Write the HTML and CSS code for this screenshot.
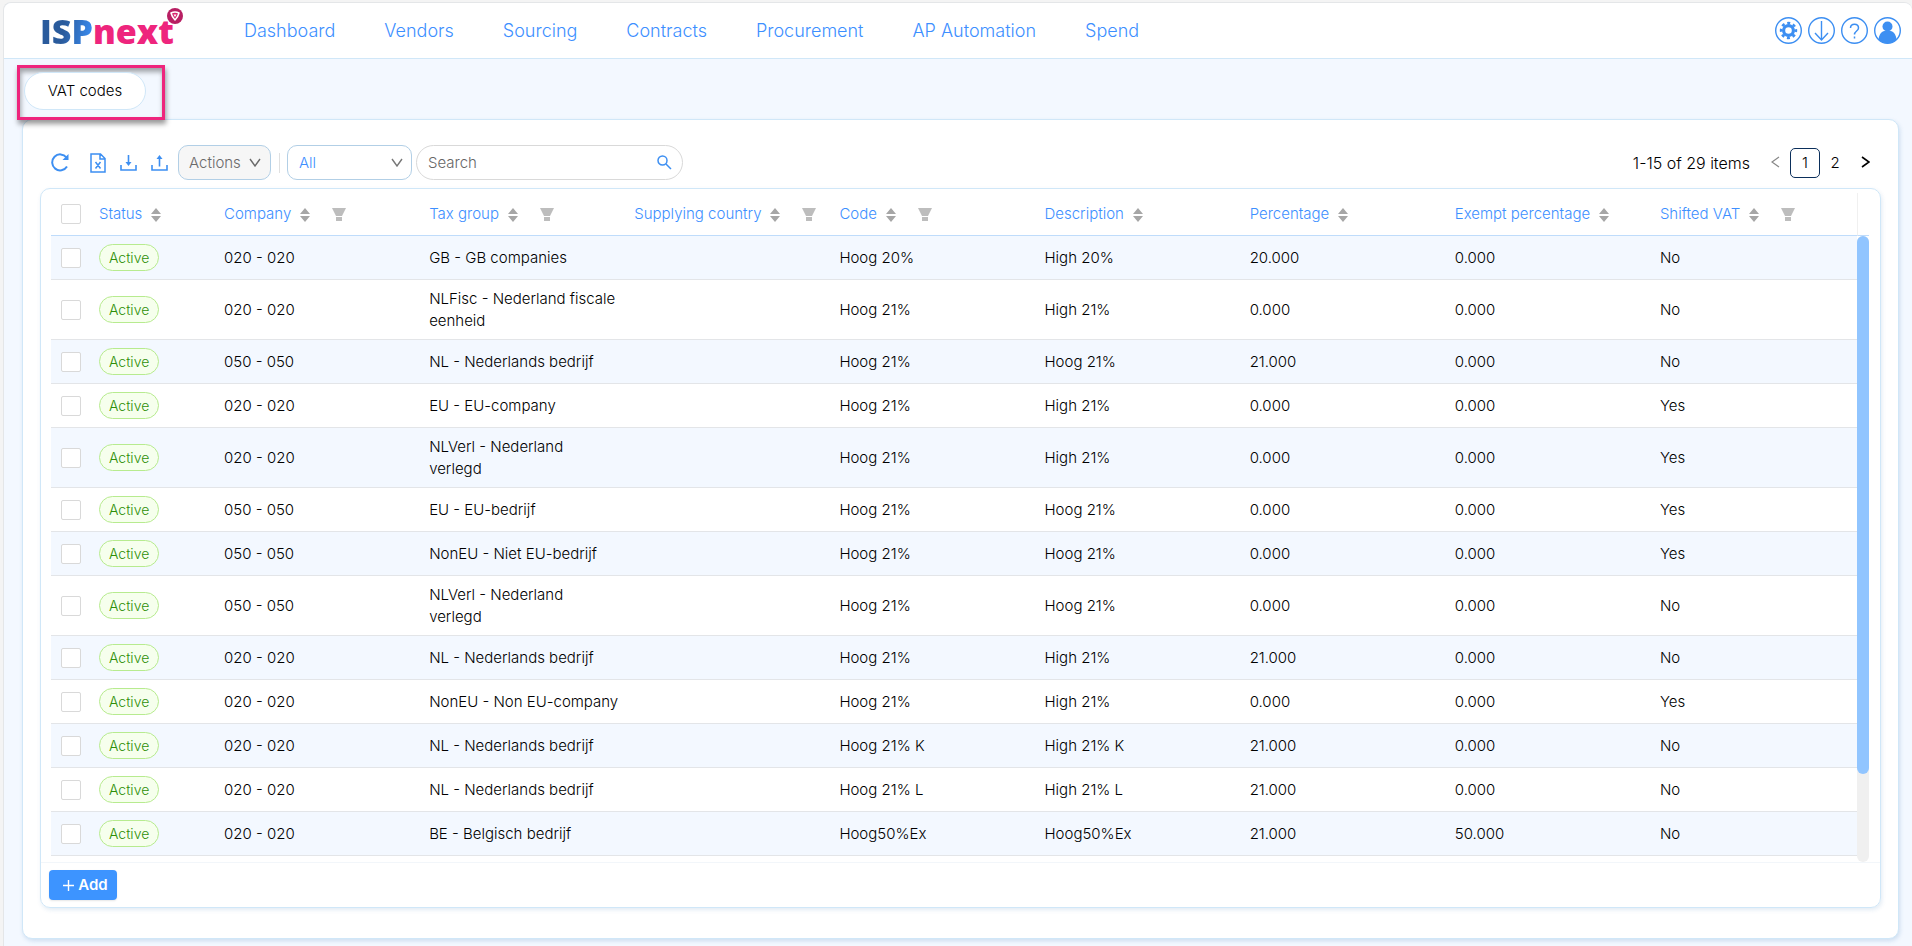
FILE: index.html
```
<!DOCTYPE html>
<html lang="en">
<head>
    <meta charset="UTF-8">
    <title>VAT codes</title>
    <link rel="stylesheet" href="styles.css">
</head>
<body>
    <!-- Icons used more than once -->
    <svg class="icon-defs" aria-hidden="true">
        <symbol id="sort" viewBox="0 0 10 14"><path d="M5 0l5 6H0zM0 8h10l-5 6z"/></symbol>
        <symbol id="filter" viewBox="0 0 14 13"><path d="M0 0h14l-4 8H4zM4 9h6v4H4z"/></symbol>
        <symbol id="down" viewBox="0 0 12 9"><path d="M1 1l5 7 5-7" fill="none" stroke="currentColor" stroke-width="1.4"/></symbol>
    </svg>

    <div class="app">
        <header class="header">
            <a class="logo" href="#" aria-label="ISPnext">
                <span class="logo-isp">ISP</span><span class="logo-next">next</span>
                <svg class="logo-mark" viewBox="0 0 16 16">
                    <circle cx="8" cy="8" r="8" fill="#b81f63"/>
                    <path d="M4 5q4-2 8 0-1 4-4 7-3-3-4-7z" fill="#d8246f" stroke="#fff" stroke-width="1.5" stroke-linejoin="round"/>
                    <path d="M6.5 6.5h3L8 9z" fill="#fff"/>
                </svg>
            </a>
            <nav class="nav">
                <a href="#">Dashboard</a>
                <a href="#">Vendors</a>
                <a href="#">Sourcing</a>
                <a href="#">Contracts</a>
                <a href="#">Procurement</a>
                <a href="#">AP Automation</a>
                <a href="#">Spend</a>
            </nav>
            <div class="header-icons">
                <button type="button" aria-label="Settings">
                    <svg viewBox="0 0 27 27" fill="none" stroke="currentColor"><circle cx="13.5" cy="13.5" r="12.8" stroke-width="1.4"/><circle cx="13.5" cy="13.5" r="4.9" stroke-width="3.2"/><circle cx="13.5" cy="13.5" r="7.4" stroke-width="2.6" stroke-dasharray="3 2.81" stroke-dashoffset="1.5"/></svg>
                </button>
                <button type="button" aria-label="Downloads">
                    <svg viewBox="0 0 27 27" fill="none" stroke="currentColor" stroke-width="1.4"><circle cx="13.5" cy="13.5" r="12.8"/><path d="M13.5 4v19M7 16l6.5 7 6.5-7"/></svg>
                </button>
                <button type="button" aria-label="Help">
                    <svg viewBox="0 0 27 27" fill="none" stroke="currentColor" stroke-width="1.5"><circle cx="13.5" cy="13.5" r="12.8" stroke-width="1.4"/><path d="M9.5 11c0-5 8-5 8 0 0 3-4 3-4 6.5M13.5 19.5v2"/></svg>
                </button>
                <button type="button" aria-label="Profile">
                    <svg viewBox="0 0 27 27" fill="currentColor"><circle cx="13.5" cy="13.5" r="12.8" fill="none" stroke="currentColor" stroke-width="1.4"/><circle cx="13.5" cy="9.5" r="5"/><path d="M4.5 22.5c.5-5 3-8 6-8.5h6c3 .5 5.5 3.5 6 8.5-5 5-13 5-18 0z"/></svg>
                </button>
            </div>
        </header>

        <div class="tabs">
            <div class="tab-highlight">
                <a class="tab" href="#">VAT codes</a>
            </div>
        </div>

        <main class="panel">
            <div class="toolbar">
                <button type="button" class="tool tool-refresh" aria-label="Refresh">
                    <svg width="20" height="20" viewBox="0 0 20 20" fill="none" stroke="currentColor" stroke-width="2"><path d="M17 13.5A8 8 0 1 1 16.5 4.5"/><path d="M18.5 1v6H12.5z" fill="currentColor" stroke="none"/></svg>
                </button>
                <button type="button" class="tool" aria-label="Export to Excel">
                    <svg width="16" height="20" viewBox="0 0 16 20" fill="none" stroke="currentColor" stroke-width="1.5"><path d="M1 1h9.5L15 5.5V19H1zM10 1v5h5M5.5 9l5 6.5M10.5 9l-5 6.5"/></svg>
                </button>
                <button type="button" class="tool" aria-label="Download">
                    <svg width="17" height="18" viewBox="0 0 17 18" fill="none" stroke="currentColor" stroke-width="1.6"><path d="M1 11v5h15v-5M8.5 1v9"/><path d="M5.5 8h6l-3 4z" fill="currentColor" stroke="none"/></svg>
                </button>
                <button type="button" class="tool" aria-label="Upload">
                    <svg width="17" height="18" viewBox="0 0 17 18" fill="none" stroke="currentColor" stroke-width="1.6"><path d="M1 11v5h15v-5M8.5 12.5V4"/><path d="M5.5 5h6l-3-4z" fill="currentColor" stroke="none"/></svg>
                </button>
                <button type="button" class="actions">Actions <svg width="12" height="9"><use href="#down"/></svg></button>
                <span class="divider"></span>
                <div class="select-box">
                    <select aria-label="Filter"><option>All</option></select>
                    <svg width="12" height="9"><use href="#down"/></svg>
                </div>
                <div class="search">
                    <input type="text" placeholder="Search" aria-label="Search">
                    <svg width="15" height="15" viewBox="0 0 15 15" fill="none" stroke="currentColor" stroke-width="1.5"><circle cx="5.5" cy="5.5" r="4.5"/><path d="M9 9l5 5"/></svg>
                </div>
                <div class="pagination">
                    <span class="total">1-15 of 29 items</span>
                    <button type="button" class="prev" aria-label="Previous page"><svg width="9" height="12" viewBox="0 0 9 12"><path d="M8 1L1 6l7 5" fill="none" stroke="currentColor" stroke-width="1.2"/></svg></button>
                    <button type="button" class="current">1</button>
                    <button type="button">2</button>
                    <button type="button" class="next" aria-label="Next page"><svg width="9" height="12" viewBox="0 0 9 12"><path d="M1 1l7 5-7 5" fill="none" stroke="currentColor" stroke-width="1.6"/></svg></button>
                </div>
            </div>

            <section class="card">
                <div class="table-area">
                    <table>
                        <thead>
                            <tr>
                                <th class="col-check"><input type="checkbox" aria-label="Select all"></th>
                                <th class="col-status">Status<svg class="sort"><use href="#sort"/></svg></th>
                                <th>Company<svg class="sort"><use href="#sort"/></svg><svg class="filter"><use href="#filter"/></svg></th>
                                <th>Tax group<svg class="sort"><use href="#sort"/></svg><svg class="filter"><use href="#filter"/></svg></th>
                                <th>Supplying country<svg class="sort"><use href="#sort"/></svg><svg class="filter"><use href="#filter"/></svg></th>
                                <th>Code<svg class="sort"><use href="#sort"/></svg><svg class="filter"><use href="#filter"/></svg></th>
                                <th>Description<svg class="sort"><use href="#sort"/></svg></th>
                                <th>Percentage<svg class="sort"><use href="#sort"/></svg></th>
                                <th>Exempt percentage<svg class="sort"><use href="#sort"/></svg></th>
                                <th>Shifted VAT<svg class="sort"><use href="#sort"/></svg><svg class="filter"><use href="#filter"/></svg></th>
                            </tr>
                        </thead>
                        <tbody id="rows"></tbody>
                    </table>
                    <div class="scroll">
                        <div class="scroll-head"></div>
                        <div class="scroll-track"><div class="scroll-thumb"></div></div>
                    </div>
                </div>
                <div class="card-footer">
                    <button type="button" class="add"><svg width="11" height="11" viewBox="0 0 11 11"><path d="M5.5 0v11M0 5.5h11" stroke="currentColor" stroke-width="1.4"/></svg>Add</button>
                </div>
            </section>
        </main>
    </div>

    <script>
        // company, tax group, supplying country, code, description, percentage, exempt percentage, shifted VAT
        const vatCodes = [
            ['020 - 020', 'GB - GB companies', '', 'Hoog 20%', 'High 20%', '20.000', '0.000', 'No'],
            ['020 - 020', 'NLFisc - Nederland fiscale eenheid', '', 'Hoog 21%', 'High 21%', '0.000', '0.000', 'No'],
            ['050 - 050', 'NL - Nederlands bedrijf', '', 'Hoog 21%', 'Hoog 21%', '21.000', '0.000', 'No'],
            ['020 - 020', 'EU - EU-company', '', 'Hoog 21%', 'High 21%', '0.000', '0.000', 'Yes'],
            ['020 - 020', 'NLVerl - Nederland verlegd', '', 'Hoog 21%', 'High 21%', '0.000', '0.000', 'Yes'],
            ['050 - 050', 'EU - EU-bedrijf', '', 'Hoog 21%', 'Hoog 21%', '0.000', '0.000', 'Yes'],
            ['050 - 050', 'NonEU - Niet EU-bedrijf', '', 'Hoog 21%', 'Hoog 21%', '0.000', '0.000', 'Yes'],
            ['050 - 050', 'NLVerl - Nederland verlegd', '', 'Hoog 21%', 'Hoog 21%', '0.000', '0.000', 'No'],
            ['020 - 020', 'NL - Nederlands bedrijf', '', 'Hoog 21%', 'High 21%', '21.000', '0.000', 'No'],
            ['020 - 020', 'NonEU - Non EU-company', '', 'Hoog 21%', 'High 21%', '0.000', '0.000', 'Yes'],
            ['020 - 020', 'NL - Nederlands bedrijf', '', 'Hoog 21% K', 'High 21% K', '21.000', '0.000', 'No'],
            ['020 - 020', 'NL - Nederlands bedrijf', '', 'Hoog 21% L', 'High 21% L', '21.000', '0.000', 'No'],
            ['020 - 020', 'BE - Belgisch bedrijf', '', 'Hoog50%Ex', 'Hoog50%Ex', '21.000', '50.000', 'No']
        ];

        document.getElementById('rows').innerHTML = vatCodes.map(row => `
            <tr>
                <td><input type="checkbox" aria-label="Select row"></td>
                <td><span class="badge">Active</span></td>
                ${row.map(value => `<td>${value}</td>`).join('')}
            </tr>`).join('');
    </script>
</body>
</html>
```
FILE: styles.css
```
* {
    box-sizing: border-box;
}

body {
    margin: 0;
    background-color: #f4f4f4;
    color: #000;
    font-family: Inter, "Liberation Sans", sans-serif;
    font-size: 15px;
    font-weight: 300;
    line-height: 22px;
}

button, input, select {
    font: inherit;
    color: inherit;
}

button {
    padding: 0;
    border: none;
    background: none;
    cursor: pointer;
}

a {
    text-decoration: none;
}

svg {
    flex-shrink: 0;
}

.icon-defs {
    display: none;
}

.app {
    min-height: calc(100vh - 2px);
    margin: 2px 0 0 3px;
    padding-bottom: 6px;
    border: 1px solid #e4e6e8;
    border-right: none;
    border-bottom: none;
    border-radius: 8px 8px 0 0;
    background-color: #f3f8ff;
}

/* Header */
.header {
    display: flex;
    align-items: center;
    height: 56px;
    padding: 0 11px 0 36px;
    border-bottom: 1px solid #d0e7f8;
    border-radius: 8px 8px 0 0;
    background-color: white;
}

.logo {
    position: relative;
    display: flex;
    width: 143px;
    margin-right: 61px;
    font-family: "Open Sans", sans-serif;
    font-size: 34px;
    font-weight: 800;
    line-height: 52px;
}

.logo-isp {
    background: linear-gradient(100deg, #2a5b9c 45%, #3d94ff);
    background-clip: text;
    -webkit-background-clip: text;
    color: transparent;
}

.logo-next {
    color: #ee257d;
}

.logo-mark {
    position: absolute;
    top: 3px;
    right: 0;
    width: 16px;
    height: 16px;
}

.nav {
    display: flex;
    gap: 49px;
    font-size: 18px;
}

.nav a {
    color: #3d8fff;
}

.header-icons {
    display: flex;
    gap: 6px;
    margin-left: auto;
    color: #3d8ff2;
}

.header-icons svg {
    display: block;
    width: 27px;
    height: 27px;
}

/* Tabs */
.tabs {
    display: flex;
    padding: 6px 13px 0;
}

.tab-highlight {
    position: relative;
    width: 148px;
    height: 55px;
    padding: 4px;
    border: 3px solid #ee257d;
    box-shadow: 1px 4px 5px rgba(0, 0, 0, 0.4), inset 1px 4px 5px rgba(0, 0, 0, 0.35);
}

.tab {
    display: block;
    width: 122px;
    padding: 7px 0;
    border: 1px solid #d0e7f8;
    border-radius: 20px;
    background-color: white;
    color: #000;
    text-align: center;
}

/* Panel */
.panel {
    margin: -1px 13px 0 18px;
    padding: 25px 17px 30px;
    border: 1px solid #d0e7f8;
    border-radius: 10px;
    background-color: white;
    box-shadow: 1px 2px 4px rgba(60, 120, 180, 0.2);
}

.toolbar {
    display: flex;
    align-items: center;
    height: 35px;
    margin-bottom: 8px;
    padding: 0 10px;
}

.tool {
    display: flex;
    margin-right: 14px;
    color: #3d8ff2;
}

.tool-refresh {
    margin-right: 20px;
}

.actions {
    display: flex;
    align-items: center;
    justify-content: space-between;
    width: 93px;
    height: 35px;
    margin-left: -4px;
    padding: 0 9px 0 10px;
    border: 1px solid #b2cfe6;
    border-radius: 10px;
    background-color: #f6f6f6;
    color: #6a6a6a;
}

.divider {
    width: 1px;
    height: 20px;
    margin: 0 7px 0 8px;
    background-color: #e0e0e0;
}

.select-box {
    position: relative;
    width: 125px;
    color: #3d8fff;
}

.select-box select {
    appearance: none;
    width: 100%;
    height: 35px;
    padding: 0 30px 0 11px;
    border: 1px solid #b2cfe6;
    border-radius: 10px;
    background-color: white;
}

.select-box svg {
    position: absolute;
    top: 13px;
    right: 9px;
    color: #777;
    pointer-events: none;
}

.search {
    position: relative;
    width: 267px;
    margin-left: 4px;
    color: #3d8ff2;
}

.search input {
    width: 100%;
    height: 35px;
    padding: 0 36px 0 11px;
    border: 1px solid #d9d9d9;
    border-radius: 18px;
    background-color: white;
    color: #000;
}

.search input::placeholder {
    color: #666;
}

.search svg {
    position: absolute;
    top: 10px;
    right: 11px;
}

.pagination {
    display: flex;
    align-items: center;
    margin-left: auto;
}

.pagination button {
    width: 30px;
    height: 30px;
}

.pagination .total {
    margin-right: 10px;
    font-size: 16px;
}

.pagination .prev {
    color: #888;
}

.pagination .current {
    border: 1px solid #0b2f5b;
    border-radius: 5px;
}

.pagination .next {
    margin-right: -9px;
}

/* Table */
.card {
    border: 1px solid #d0e7f8;
    border-radius: 10px;
    box-shadow: 1px 2px 4px rgba(60, 120, 180, 0.15);
}

.table-area {
    display: flex;
    padding: 4px 11px 0 10px;
}

table {
    flex: 1;
    align-self: flex-start;
    width: 100%;
    margin-bottom: 6px;
    table-layout: fixed;
    border-spacing: 0;
}

th {
    height: 43px;
    padding: 0 8px;
    border-bottom: 1px solid #bfdcfb;
    color: #3d8fff;
    font-weight: inherit;
    text-align: left;
    white-space: nowrap;
}

td {
    height: 44px;
    padding: 8px 7px 7px 8px;
    border-bottom: 1px solid #e3e5e8;
}

tbody tr:nth-child(odd) {
    background-color: #f3f8ff;
}

.col-check {
    width: 40px;
}

.col-status {
    width: 125px;
}

th:first-child, td:first-child {
    padding: 0 10px;
}

td:nth-child(2) {
    padding: 0 8px;
}

.sort {
    width: 10px;
    height: 14px;
    margin-left: 9px;
    vertical-align: middle;
    fill: #a6a6a6;
}

.filter {
    width: 14px;
    height: 13px;
    margin-left: 22px;
    vertical-align: middle;
    fill: #bdbdbd;
}

input[type="checkbox"] {
    display: block;
    appearance: none;
    width: 20px;
    height: 20px;
    margin: 0;
    border: 1px solid #d9d9d9;
    border-radius: 2px;
    background-color: white;
}

.badge {
    display: inline-block;
    height: 27px;
    padding: 0 9px;
    border: 1px solid #b7eb8f;
    border-radius: 14px;
    background-color: #f6ffed;
    color: #2f8f0a;
    font-size: 14px;
    line-height: 25px;
    vertical-align: middle;
}

.scroll {
    display: flex;
    flex-direction: column;
    width: 12px;
}

.scroll-head {
    height: 43px;
    border-left: 1px solid #f0f0f0;
    border-bottom: 1px solid #bfdcfb;
}

.scroll-track {
    flex: 1;
    border-radius: 6px;
    background-color: #f0f0f0;
}

.scroll-thumb {
    height: 86%;
    border-radius: 6px;
    background-color: #91c5ff;
}

.card-footer {
    padding: 7px 8px;
    border-top: 1px solid #f2f6fa;
}

.add {
    display: flex;
    align-items: center;
    justify-content: center;
    gap: 4px;
    width: 68px;
    height: 30px;
    padding-left: 5px;
    border-radius: 4px;
    background-color: #3d94ff;
    box-shadow: 0 1px 2px rgba(0, 0, 0, 0.1);
    color: white;
    font-weight: 600;
}
```
